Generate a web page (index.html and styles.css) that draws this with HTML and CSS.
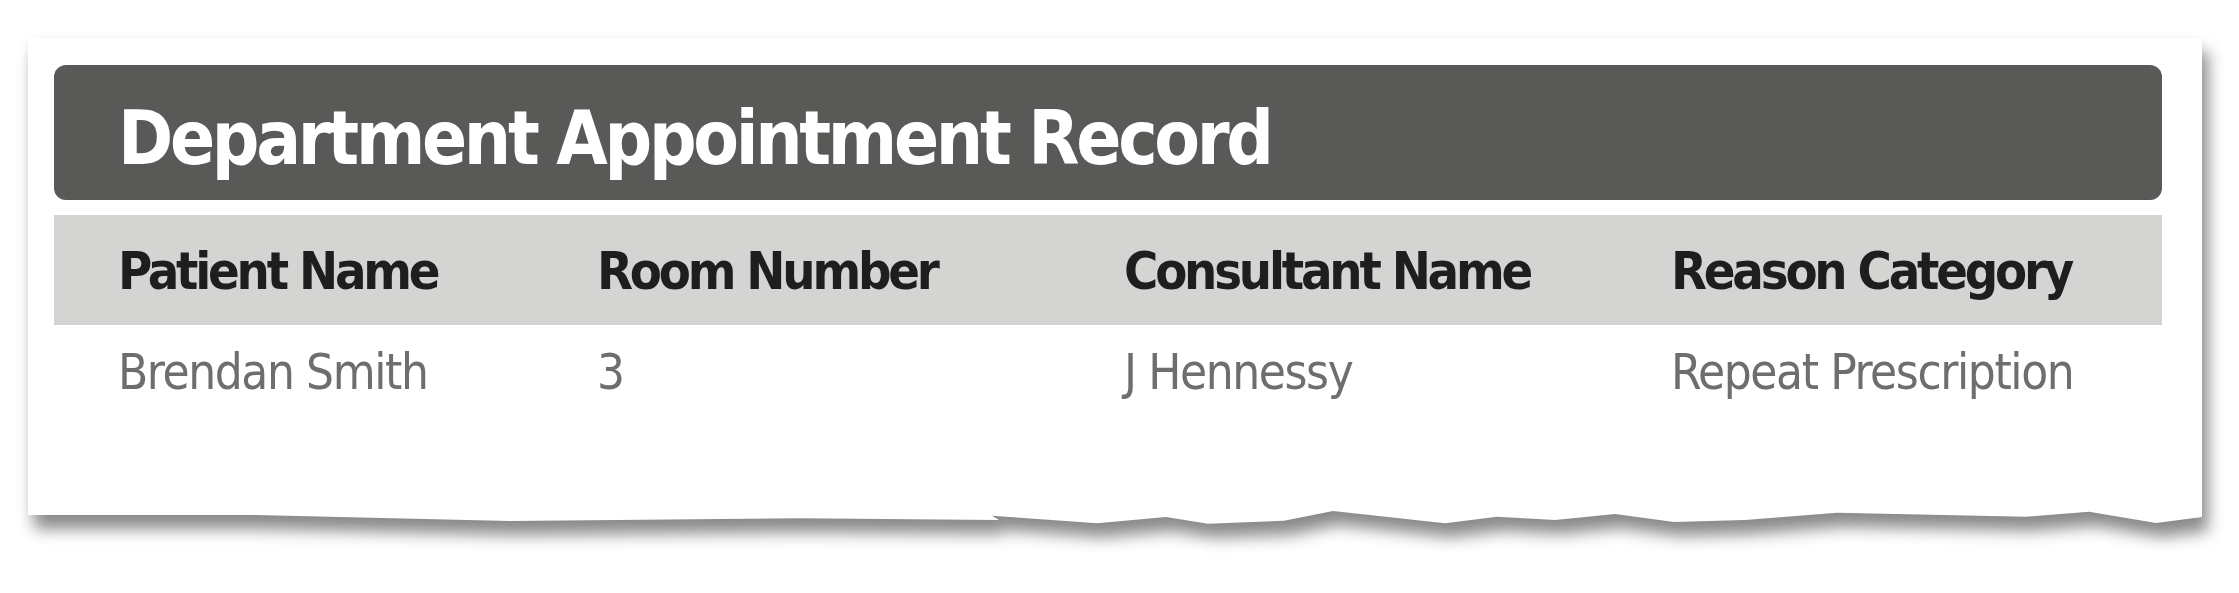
FILE: index.html
```html
<!DOCTYPE html>
<html lang="en">
<head>
<meta charset="utf-8">
<title>Department Appointment Record</title>
<link rel="stylesheet" href="styles.css">
</head>
<body>
<div class="sheet">
  <div class="paper">
    <div class="title-bar"><h1 class="title">Department Appointment Record</h1></div>
    <div class="table">
      <div class="row head">
        <div class="cell">Patient Name</div>
        <div class="cell">Room Number</div>
        <div class="cell">Consultant Name</div>
        <div class="cell">Reason Category</div>
      </div>
      <div class="row data">
        <div class="cell">Brendan Smith</div>
        <div class="cell">3</div>
        <div class="cell">J Hennessy</div>
        <div class="cell">Repeat Prescription</div>
      </div>
    </div>
  </div>
</div>
</body>
</html>
```
FILE: styles.css
```css
html, body {
  margin: 0;
  background: #ffffff;
}
body {
  padding: 38px 0 0 28px;
  font-family: "DejaVu Sans", "Liberation Sans", sans-serif;
  font-stretch: condensed;
}
.sheet {
  width: 2174px;
  padding: 0 30px 50px 0;
  filter: drop-shadow(6px 14px 8px rgba(0, 0, 0, 0.45)) drop-shadow(0 0 5px rgba(0, 0, 0, 0.04));
}
.paper {
  box-sizing: border-box;
  width: 2174px;
  height: 486px;
  background: #ffffff;
  padding: 27px 40px 0 26px;
  clip-path: polygon(0 0, 2174px 0, 2174px 479px, 2128px 485px, 2061px 473.7px, 1998px 478.7px, 1809px 474.7px, 1717px 482px, 1646px 484px, 1587px 476px, 1527px 482px, 1469px 478.7px, 1417px 485.3px, 1305px 473px, 1256px 482.7px, 1180px 485.7px, 1138px 479px, 1069px 485.3px, 964px 477.7px, 971px 482px, 772px 480.3px, 482px 483px, 227px 477px, 0 477px);
}
.title-bar {
  box-sizing: border-box;
  height: 135px;
  background: #595957;
  border-radius: 12px;
  padding: 36px 0 0 64px;
}
.title {
  margin: 0;
  font-size: 74px;
  line-height: 1;
  font-weight: bold;
  color: #ffffff;
  letter-spacing: -3.3px;
}
.table {
  margin-top: 15px;
}
.row {
  display: grid;
  grid-template-columns: 479px 527px 547px 555px;
}
.cell {
  padding-left: 64px;
  line-height: 1;
  white-space: nowrap;
}
.head {
  box-sizing: border-box;
  height: 110px;
  padding-top: 30px;
  background: #d4d4d3;
}
.head .cell {
  font-size: 52px;
  font-weight: bold;
  color: #1e1e1e;
  letter-spacing: -3.2px;
}
.data {
  padding-top: 23px;
}
.data .cell {
  font-size: 49px;
  color: #6e6e6e;
  letter-spacing: -1.4px;
}
```
